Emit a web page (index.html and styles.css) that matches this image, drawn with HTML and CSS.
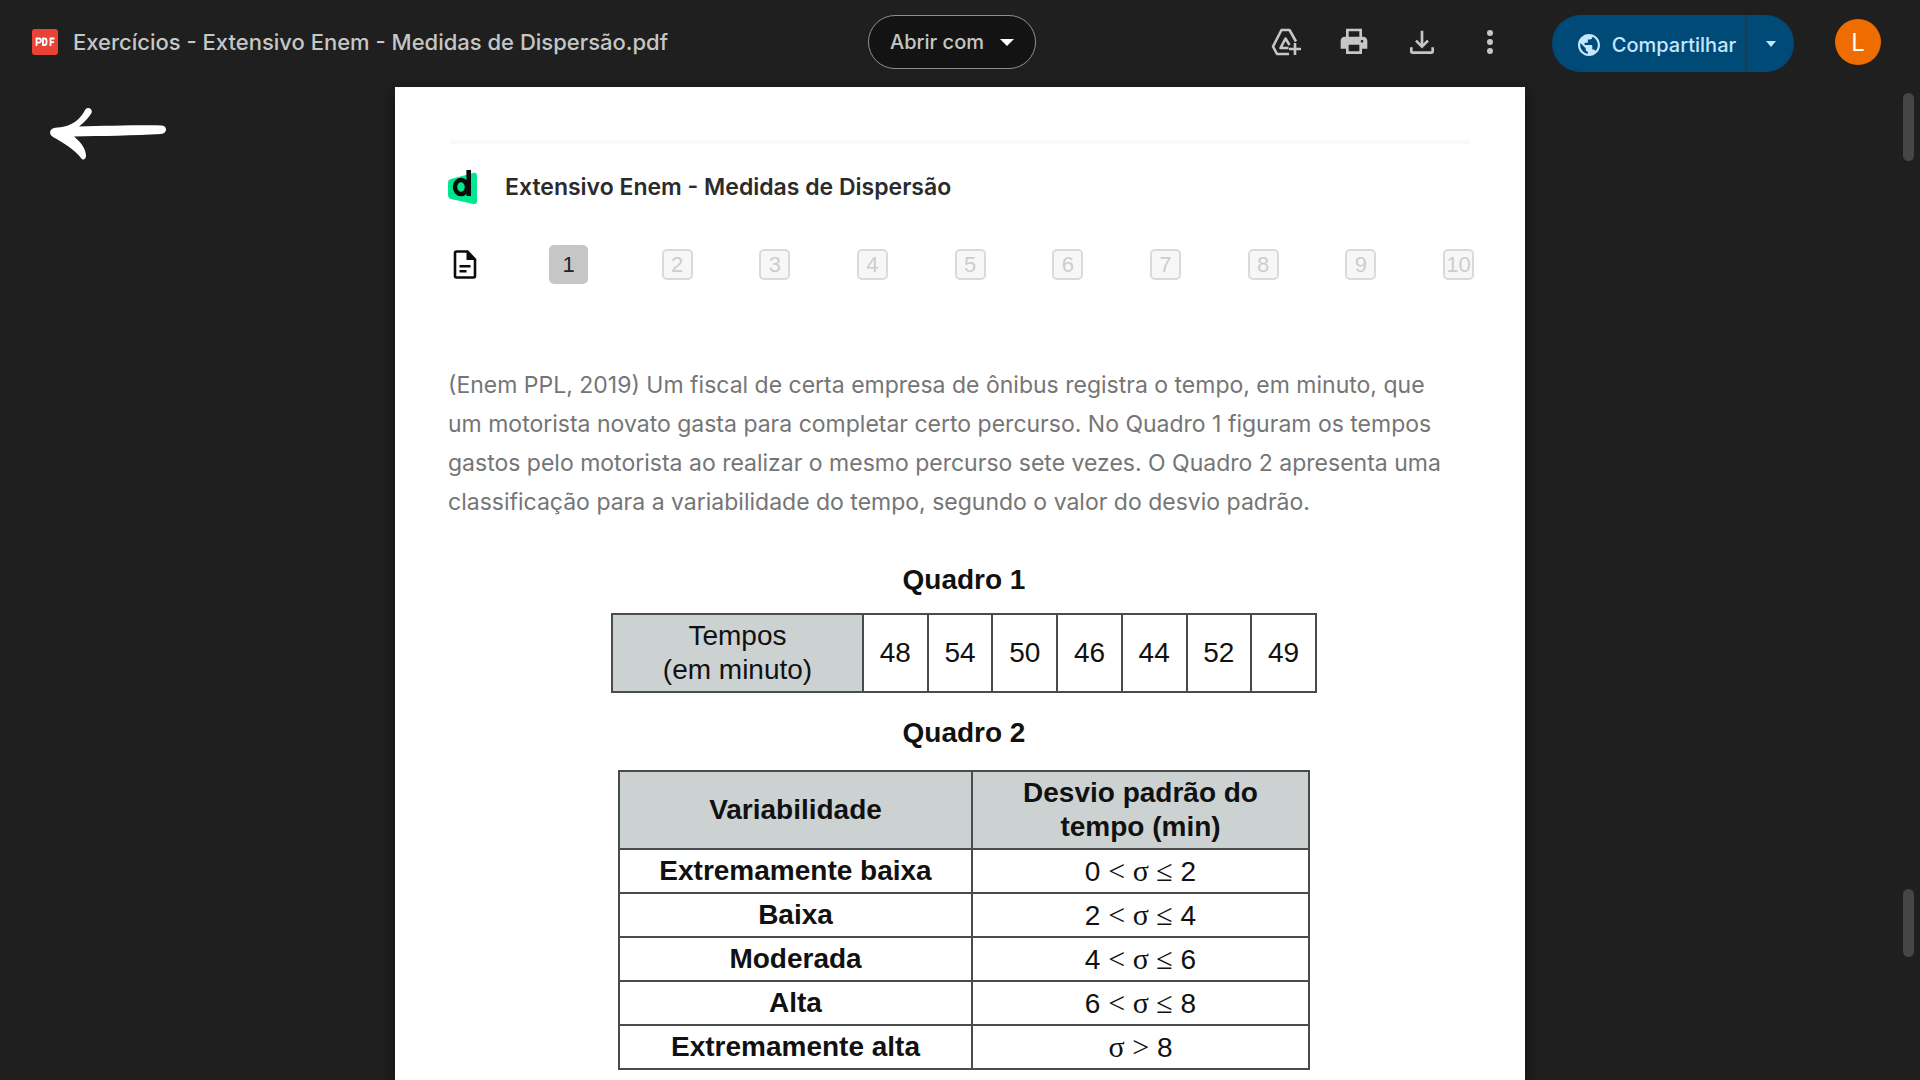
FILE: index.html
```html
<!DOCTYPE html>
<html lang="pt-BR">
<head>
<meta charset="utf-8">
<title>Exercícios - Extensivo Enem - Medidas de Dispersão.pdf</title>
<meta name="viewport" content="width=device-width, initial-scale=1">
<link rel="stylesheet" href="styles.css">
</head>
<body>
<header class="toolbar">
  <div class="file">
    <svg class="file-icon" viewBox="0 0 26 26" role="img" aria-label="PDF">
      <rect width="26" height="26" rx="3" fill="#ea4335"/>
      <path d="M4.500 17V9.500h2.300a2 2 0 0 1 0 4.200H4.500M11 9.500v6.500h1.500a2 2 0 0 0 2-2v-2.500a2 2 0 0 0-2-2zM18.500 17V9.500h4M18.500 13.200h3.500" fill="none" stroke="#fff" stroke-width="1.800"/>
    </svg>
    <h1 class="file-name">Exercícios - Extensivo Enem - Medidas de Dispersão.pdf</h1>
  </div>
  <button class="open-with" type="button">Abrir com
    <svg class="caret" viewBox="0 0 14 7" aria-hidden="true"><path d="M0 0h14L7 7z"/></svg>
  </button>
  <div class="actions">
    <div class="tools">
      <button class="tool" type="button" aria-label="Adicionar atalho ao Drive">
        <svg viewBox="0 0 32 32" fill="none" stroke="currentColor" stroke-width="2.600" stroke-linejoin="round"><path d="M19 28H7L3 20.500 11.500 4h8l6.500 11.500"/><path d="M18.500 22H10.500L15.500 12.500l4 6.500"/><path d="M25 17v12M19 23h12"/></svg>
      </button>
      <button class="tool" type="button" aria-label="Imprimir">
        <svg viewBox="0 0 24 24" fill="currentColor" fill-rule="evenodd"><path d="M18 8V2H6v6H5c-1.660 0-3 1.340-3 3v6h4v4h12v-4h4v-6c0-1.660-1.340-3-3-3zM8 4h8v4H8zm8 15H8v-5h8zm2-6.500a1 1 0 1 1 0-2 1 1 0 0 1 0 2z"/></svg>
      </button>
      <button class="tool" type="button" aria-label="Fazer download">
        <svg viewBox="0 0 24 24" fill="none" stroke="currentColor" stroke-width="2"><path d="M12 3.500v12M7.500 11l4.500 4.500 4.500-4.500M4 16v3q0 1 1 1h14q1 0 1-1v-3"/></svg>
      </button>
      <button class="tool" type="button" aria-label="Mais ações">
        <svg viewBox="0 0 32 32" fill="currentColor"><circle cx="16" cy="7" r="3"/><circle cx="16" cy="16" r="3"/><circle cx="16" cy="25" r="3"/></svg>
      </button>
    </div>
    <div class="share">
      <button class="share-main" type="button">
        <svg class="globe" viewBox="2 2 20 20" fill="currentColor" aria-hidden="true"><path d="M12 2C6.480 2 2 6.480 2 12s4.480 10 10 10 10-4.480 10-10S17.520 2 12 2zm-1 17.930c-3.950-.490-7-3.850-7-7.930 0-.620.080-1.210.210-1.790L9 15v1c0 1.100.900 2 2 2v1.930zm6.900-2.540c-.260-.810-1-1.390-1.900-1.390h-1v-3c0-.550-.450-1-1-1H8v-2h2c.550 0 1-.450 1-1V7h2c1.100 0 2-.900 2-2v-.410c2.930 1.190 5 4.060 5 7.410 0 2.080-.800 3.970-2.100 5.390z"/></svg>
        Compartilhar
      </button>
      <button class="share-menu" type="button" aria-label="Opções de compartilhamento">
        <svg class="caret-small" viewBox="0 0 10 6" aria-hidden="true"><path d="M0 0h10L5 6z"/></svg>
      </button>
    </div>
    <button class="avatar" type="button" aria-label="Conta">L</button>
  </div>
</header>

<main class="viewer">
  <div class="side">
    <a class="back" href="#" aria-label="Voltar">
      <svg viewBox="0 0 116 52" fill="#fff"><path d="M112 17.500C90 17 55 18 29 18.500c6-5 10-9 12.500-13.500C43 1 38-2 35 2c-3 6-8 12-17 15.500-5 2-10 1.500-14 2.500-5 1.500-5 6.500-1 9 11 6 22 13 28 21 2 3 5 1 5-2 0-7-5-14-12-19.500C50 28 85 27.500 111 26c6.500-.500 6.500-8 1-8.500z"/></svg>
    </a>
  </div>

  <article class="sheet">
    <hr class="rule">
    <div class="brand">
      <svg class="logo" viewBox="0 0 29 34" aria-hidden="true">
        <path d="M3 9 25 3q4-1 4 3v25q0 4-4 3L3 29q-3-1-3-4V12q0-2 3-3z" fill="#00e88f"/>
        <ellipse cx="13" cy="17" rx="6" ry="7" fill="none" stroke="#0b0b0b" stroke-width="4.500"/>
        <path d="M20.700 0v26" stroke="#0b0b0b" stroke-width="4.600"/>
      </svg>
      <h2 class="title">Extensivo Enem - Medidas de Dispersão</h2>
    </div>

    <nav class="pager" aria-label="Questões">
      <svg class="doc-icon" viewBox="0 0 23 29" aria-hidden="true">
        <path d="M3 1.500h11l7.500 8V26q0 1.500-1.500 1.500H3q-1.500 0-1.500-1.500V3Q1.500 1.500 3 1.500z" fill="none" stroke="#0b0b0b" stroke-width="2.600"/>
        <path d="M13 1.500V10h8.500zM6 15h11v2.600H6zM6 20h7v2.600H6z" fill="#0b0b0b"/>
      </svg>
      <ol class="steps">
        <li class="current"><button class="step" type="button" aria-current="step">1</button></li>
        <li><button class="step" type="button">2</button></li>
        <li><button class="step" type="button">3</button></li>
        <li><button class="step" type="button">4</button></li>
        <li><button class="step" type="button">5</button></li>
        <li><button class="step" type="button">6</button></li>
        <li><button class="step" type="button">7</button></li>
        <li><button class="step" type="button">8</button></li>
        <li><button class="step" type="button">9</button></li>
        <li><button class="step" type="button">10</button></li>
      </ol>
    </nav>

    <p class="question">(Enem PPL, 2019) Um fiscal de certa empresa de ônibus registra o tempo, em minuto, que<br>um motorista novato gasta para completar certo percurso. No Quadro 1 figuram os tempos<br>gastos pelo motorista ao realizar o mesmo percurso sete vezes. O Quadro 2 apresenta uma<br>classificação para a variabilidade do tempo, segundo o valor do desvio padrão.</p>

    <div class="tables">
      <table class="grid times">
        <caption>Quadro 1</caption>
        <tr><th scope="row">Tempos<br>(em minuto)</th><td>48</td><td>54</td><td>50</td><td>46</td><td>44</td><td>52</td><td>49</td></tr>
      </table>

      <table class="grid ranges">
        <caption>Quadro 2</caption>
        <thead>
          <tr><th scope="col">Variabilidade</th><th scope="col">Desvio padrão do<br>tempo (min)</th></tr>
        </thead>
        <tbody>
          <tr><th scope="row">Extremamente baixa</th><td>0 <i>&lt; σ ≤</i> 2</td></tr>
          <tr><th scope="row">Baixa</th><td>2 <i>&lt; σ ≤</i> 4</td></tr>
          <tr><th scope="row">Moderada</th><td>4 <i>&lt; σ ≤</i> 6</td></tr>
          <tr><th scope="row">Alta</th><td>6 <i>&lt; σ ≤</i> 8</td></tr>
          <tr><th scope="row">Extremamente alta</th><td><i>σ &gt;</i> 8</td></tr>
        </tbody>
      </table>
    </div>
  </article>

  <div class="side rail" aria-hidden="true">
    <span class="thumb"></span>
    <span class="thumb"></span>
  </div>
</main>
</body>
</html>
```
FILE: styles.css
```css
* { box-sizing: border-box; }

body {
  margin: 0;
  min-height: 100vh;
  display: flex;
  flex-direction: column;
  background: #1f1f1f;
  font-family: Inter, "Liberation Sans", sans-serif;
}

button {
  margin: 0;
  padding: 0;
  border: 0;
  background: none;
  color: inherit;
  font: inherit;
  cursor: pointer;
}

/* Toolbar */
.toolbar {
  display: grid;
  grid-template-columns: minmax(0, 836fr) auto minmax(0, 845fr);
  align-items: center;
  height: 87px;
  padding: 0 39px 3px 32px;
  color: #c4c7c5;
}

.file { display: flex; align-items: center; gap: 15px; white-space: nowrap; }
.file-icon { width: 26px; height: 26px; }
.file-name { margin: 0; font: 500 22px/32px Inter, sans-serif; }

.open-with {
  display: flex;
  align-items: center;
  justify-content: center;
  gap: 16px;
  width: 168px;
  height: 54px;
  border: 1px solid #8e918f;
  border-radius: 27px;
  background: #131314;
  font-size: 20px;
  font-weight: 500;
}
.caret { width: 14px; height: 7px; fill: #fff; }

.actions { display: flex; align-items: center; justify-content: flex-end; }
.tools { display: flex; gap: 36px; margin-right: 46px; }
.tool { width: 32px; height: 32px; }
.tool svg { display: block; width: 32px; height: 32px; }

.share {
  display: flex;
  height: 57px;
  margin: 3px 41px 0 0;
  border-radius: 29px;
  overflow: hidden;
  background: #004a77;
  color: #c2e7ff;
}
.share-main {
  display: flex;
  align-items: center;
  justify-content: center;
  gap: 12px;
  width: 195px;
  padding: 3px 0 0 16px;
  border-right: 1px solid #1f3a4d;
  font-size: 20px;
  font-weight: 500;
}
.globe { width: 22px; height: 22px; }
.share-menu { width: 47px; }
.caret-small { display: block; width: 10px; height: 6px; margin: 0 auto; fill: #c2e7ff; }

.avatar {
  width: 46px;
  height: 46px;
  border-radius: 50%;
  background: #ef6c00;
  color: #fff;
  font-size: 24px;
}

/* Viewer */
.viewer {
  flex: 1;
  display: grid;
  grid-template-columns: minmax(0, 395fr) minmax(0, 1130fr) minmax(0, 395fr);
}
.back { display: block; width: 116px; margin: 21px 0 0 50px; }
.back svg { display: block; width: 116px; height: 52px; }

.rail {
  display: flex;
  flex-direction: column;
  align-items: flex-end;
  gap: 728px;
  padding: 6px 6px 0 0;
}
.thumb { width: 11px; height: 68px; border-radius: 6px; background: #444746; }

/* Document */
.sheet {
  padding: 53px 51px 10px 53px;
  background: #fff;
  box-shadow: 0 4px 16px rgba(0, 0, 0, .5);
}
.rule { height: 4px; margin: 0 4px 0 2px; border: 0; background: #fafafa; }

.brand { display: flex; align-items: center; gap: 28px; margin-top: 26px; }
.logo { width: 29px; height: 34px; }
.title { margin: 0; color: #2b2b2b; font: 600 23px/34px Inter, sans-serif; }

.pager { display: flex; align-items: center; gap: 72px; margin-top: 41px; padding-left: 5px; }
.doc-icon { width: 24px; height: 29px; }
.steps {
  flex: 1;
  display: flex;
  align-items: center;
  justify-content: space-between;
  margin: 0;
  padding: 0;
  list-style: none;
}
.step {
  display: block;
  width: 31px;
  height: 31px;
  border: 2px solid #dadada;
  border-radius: 5px;
  background: #f7f7f7;
  color: #cdcdcd;
  font: 22px/27px "Liberation Sans", sans-serif;
}
.current { margin-right: 7px; }
.current .step {
  width: 39px;
  height: 39px;
  border: 0;
  background: #c6c6c6;
  color: #222;
}

.question {
  margin: 82px 0 0;
  color: #757575;
  font: 23px/39px Inter, sans-serif;
  white-space: nowrap;
}

/* Data tables */
.tables { padding: 41px 0 0 6px; }
.grid {
  margin: 0 auto;
  border-collapse: collapse;
  table-layout: fixed;
  color: #111;
  font: 28px/34px "Liberation Sans", Arial, sans-serif;
  text-align: center;
}
.grid caption { font-weight: 700; line-height: 34px; }
.grid th, .grid td { padding: 0; border: 2px solid #4a4c4c; }

.times { width: 706px; }
.times caption { padding-bottom: 16px; }
.times tr { height: 78px; }
.times th { width: 251px; background: #ccd2d2; font-weight: 400; }

.ranges { width: 692px; margin-top: 23px; }
.ranges caption { padding-bottom: 20px; }
.ranges th:first-child { width: 353px; }
.ranges thead tr { height: 78px; }
.ranges thead th { background: #ccd2d2; }
.ranges tbody tr { height: 44px; }
.ranges i { font: 30px/34px "Liberation Serif", serif; }
```
